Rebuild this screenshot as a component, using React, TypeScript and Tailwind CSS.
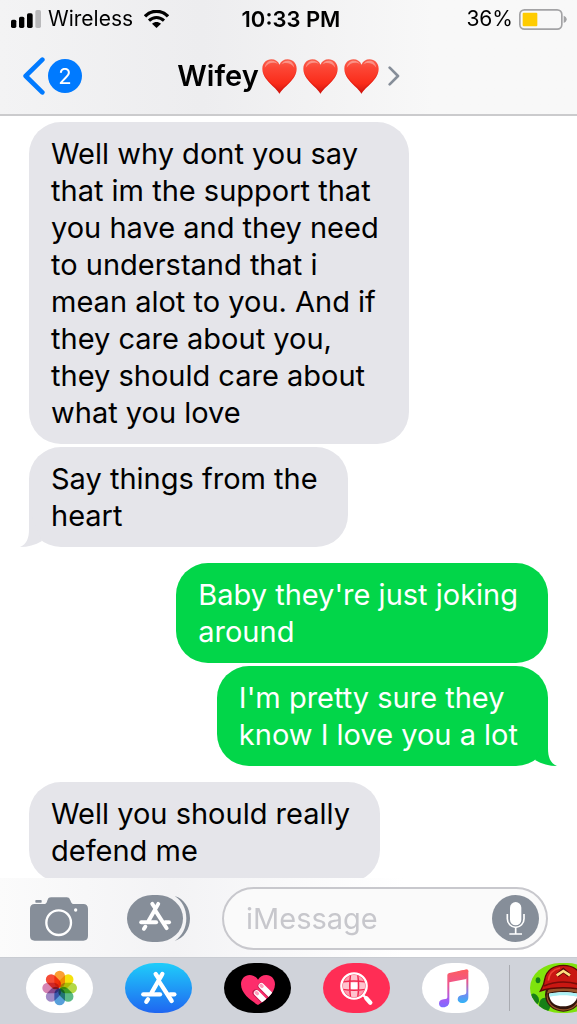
import type { ReactNode } from "react";
import { clsx } from "clsx";

type Message = {
  from: "me" | "them";
  text: string;
  tail?: boolean;
  newGroup?: boolean;
};

const messages: Message[] = [
  {
    from: "them",
    text: "Well why dont you say\nthat im the support that\nyou have and they need\nto understand that i\nmean alot to you. And if\nthey care about you,\nthey should care about\nwhat you love",
  },
  { from: "them", text: "Say things from the\nheart", tail: true },
  { from: "me", text: "Baby they're just joking\naround", newGroup: true },
  { from: "me", text: "I'm pretty sure they\nknow I love you a lot", tail: true },
  { from: "them", text: "Well you should really\ndefend me", newGroup: true },
];

const petals = ["#fb9a28", "#f5e000", "#b0d63c", "#52b780", "#4f9ad8", "#9c84c4", "#d47eb0", "#f5412c"];

function SignalIcon() {
  return (
    <svg viewBox="0 0 90 54" className="h-[18px] w-[30px]" aria-hidden="true">
      <rect x="0" y="29" width="16" height="25" rx="5" />
      <rect x="24" y="20" width="16" height="34" rx="5" />
      <rect x="48" y="10" width="17" height="44" rx="5" />
      <rect x="73" y="0" width="17" height="54" rx="5" fill="#b9b9bb" />
    </svg>
  );
}

function WifiIcon() {
  return (
    <svg viewBox="0 0 75 54" className="h-[18px] w-[25px]" aria-hidden="true">
      <path d="M3 19C22-1 53-1 72 19" fill="none" stroke="#000" strokeWidth="10" />
      <path d="M15 32C28 19 47 19 60 32" fill="none" stroke="#000" strokeWidth="9" />
      <path d="M24 41c8-7 19-7 27 0L37.500 54z" />
    </svg>
  );
}

function BatteryIcon() {
  return (
    <svg viewBox="0 0 144 63" className="h-[21px] w-[48px]" aria-hidden="true">
      <rect x="2.500" y="2.500" width="126" height="58" rx="14" fill="none" stroke="#a3a3a5" strokeWidth="5" />
      <rect x="11" y="11" width="44" height="41" rx="3" fill="#ffcc00" />
      <path d="M134 20c12 4 12 18 0 22z" fill="#a3a3a5" />
    </svg>
  );
}

function Heart({ id }: { id: string }) {
  return (
    <svg viewBox="0 0 104 104" className="h-[35px] w-[35px]" aria-hidden="true">
      <defs>
        <linearGradient id={id} x1="0" y1="0" x2="0" y2="1">
          <stop offset="0" stopColor="#f8604e" />
          <stop offset="0.25" stopColor="#fc4635" />
          <stop offset="0.7" stopColor="#fa2c1a" />
          <stop offset="1" stopColor="#cf160f" />
        </linearGradient>
      </defs>
      <path
        d="M52 103C42 84 1 62 1 29 1 12 13 1 28 1c11 0 20 6 24 16C56 7 65 1 76 1c15 0 27 11 27 28 0 33-41 55-51 74z"
        fill={`url(#${id})`}
      />
      <path d="M8 26C10 13 18 5 29 5c9 0 15 4 18 10-9-6-28-7-39 11z" fill="#fff" opacity="0.35" />
      <path d="M57 16C61 9 67 5 76 5c11 0 18 8 20 21C85 9 66 9 57 16z" fill="#fff" opacity="0.35" />
      <path d="M102 36c-3 28-38 46-50 67C42 84 5 64 2 36c9 28 38 43 50 59 13-16 41-31 50-59z" fill="#d0150e" opacity="0.4" />
    </svg>
  );
}

function CameraIcon() {
  return (
    <svg viewBox="0 0 174 132" className="h-[44px] w-[58px]" aria-hidden="true">
      <path
        d="M14 21h28c8 0 8-6 11-13 2-5 5-7 10-7h47c5 0 8 2 10 7 4 7 4 13 12 13h28c9 0 14 5 14 14v82c0 9-5 14-14 14H14c-9 0-14-5-14-14V35c0-9 5-14 14-14z"
        fill="#868e99"
      />
      <rect x="16" y="9" width="19" height="8" rx="2" fill="#868e99" />
      <circle cx="86" cy="77" r="37" fill="none" stroke="#fff" strokeWidth="7" />
      <circle cx="137" cy="39" r="5" fill="#fff" />
    </svg>
  );
}

// The crossed sticks, shared by the drawer button and the App Store pill
function StoreGlyph() {
  return (
    <g fill="none" stroke="#fff" strokeLinecap="round" strokeWidth="13">
      <path d="M112 33 80 89" />
      <path d="M55 94h50" />
      <path d="M135 94h13" />
      <path d="m69 109-5 7" />
      <path d="m92 33 8 12M104 58l36 56" />
    </g>
  );
}

function AppDrawerIcon() {
  return (
    <svg viewBox="0 0 189 141" className="h-[47px] w-[63px]" aria-hidden="true">
      <rect width="168" height="141" rx="76" ry="70.500" fill="#868e99" />
      <path d="M143 3c28 8 46 35 46 67s-18 60-46 68c23-15 35-40 35-68S166 18 143 3z" fill="#868e99" />
      <g transform="translate(-7 -3) scale(0.9)">
        <StoreGlyph />
      </g>
    </svg>
  );
}

function MicIcon() {
  return (
    <svg viewBox="0 0 141 141" className="size-[47px]" aria-hidden="true">
      <circle cx="70.500" cy="70.500" r="70.500" fill="#868e99" />
      <rect x="54" y="21" width="34" height="70" rx="17" fill="#fff" />
      <path d="M46 57v14a25 26 0 0 0 50 0V57M71 97v19M52 117h38" fill="none" stroke="#fff" strokeWidth="5" />
    </svg>
  );
}

function PhotosArt() {
  return (
    <svg viewBox="0 0 201 150" className="h-full w-full" aria-hidden="true">
      <rect width="201" height="150" fill="#fff" />
      {petals.map((color, i) => (
        <rect
          key={color}
          x="85"
          y="23"
          width="32"
          height="51"
          rx="16"
          fill={color}
          opacity="0.95"
          transform={`rotate(${i * 45} 101 75)`}
          className="mix-blend-multiply"
        />
      ))}
    </svg>
  );
}

function StoreArt() {
  return (
    <svg viewBox="0 0 201 150" className="h-full w-full" aria-hidden="true">
      <defs>
        <linearGradient id="store" x1="0" y1="0" x2="0" y2="1">
          <stop offset="0" stopColor="#1fcdfa" />
          <stop offset="1" stopColor="#1f66f1" />
        </linearGradient>
      </defs>
      <rect width="201" height="150" fill="url(#store)" />
      <StoreGlyph />
    </svg>
  );
}

function TouchArt() {
  const heart = "M102 126C86 116 51 94 51 64c0-17 12-28 26-28 11 0 20 6 25 14 5-8 14-14 25-14 14 0 26 11 26 28 0 30-35 52-51 62z";
  return (
    <svg viewBox="0 0 201 150" className="h-full w-full" aria-hidden="true">
      <defs>
        <clipPath id="touch">
          <path d={heart} />
        </clipPath>
      </defs>
      <rect width="201" height="150" fill="#000" />
      <path d={heart} fill="#fd2d6b" />
      <g clipPath="url(#touch)" fill="none" strokeLinecap="round">
        <path d="m95 89 42 42M111 69l42 42" stroke="#c41c50" strokeWidth="20" />
        <path d="m98 90 42 42M112 68l42 42" stroke="#fff" strokeWidth="17" />
        <path d="m97 89 3 3M111 67l3 3" stroke="#ff9dbb" strokeWidth="10" />
      </g>
    </svg>
  );
}

function SearchArt() {
  return (
    <svg viewBox="0 0 201 150" className="h-full w-full" aria-hidden="true">
      <defs>
        <clipPath id="globe">
          <circle cx="93" cy="69" r="33" />
        </clipPath>
      </defs>
      <rect width="201" height="150" fill="#ff2d55" />
      <g clipPath="url(#globe)">
        <rect x="60" y="36" width="66" height="66" fill="#ff9bae" />
        <path d="M84 36h18v20H84zM60 58h22v20H60zM104 58h22v20h-22zM84 80h18v22H84z" fill="#ffc3ce" />
        <rect x="84" y="58" width="19" height="20" fill="#fff" />
        <path d="M83 34q-6 35 0 70M104 34q6 35 0 70M58 57q35-6 70 0M58 79q35 6 70 0" fill="none" stroke="#f0284e" strokeWidth="4" />
      </g>
      <circle cx="93" cy="69" r="38" fill="none" stroke="#fff" strokeWidth="7" />
      <path d="m121 97 8 8" stroke="#fff" strokeWidth="7" />
      <path d="m130 106 12 13" stroke="#fff" strokeWidth="13" strokeLinecap="round" />
    </svg>
  );
}

function MusicArt() {
  return (
    <svg viewBox="0 0 201 150" className="h-full w-full" aria-hidden="true">
      <defs>
        <linearGradient id="noteLeft" gradientUnits="userSpaceOnUse" x1="0" y1="22" x2="0" y2="132">
          <stop offset="0" stopColor="#fd5c62" />
          <stop offset="0.400" stopColor="#ee5590" />
          <stop offset="0.800" stopColor="#a25cf5" />
          <stop offset="1" stopColor="#7c6bff" />
        </linearGradient>
        <linearGradient id="noteRight" gradientUnits="userSpaceOnUse" x1="0" y1="22" x2="0" y2="120">
          <stop offset="0" stopColor="#fd5c62" />
          <stop offset="0.350" stopColor="#e2588f" />
          <stop offset="0.700" stopColor="#7b86f0" />
          <stop offset="1" stopColor="#30b4f7" />
        </linearGradient>
      </defs>
      <rect width="201" height="150" fill="#fff" />
      <path
        d="M128 21q11-4 11 3v78c0 12-8 18-19 18-8 0-13-5-13-11 0-8 6-12 14-13 8-1 12-2 12-9V46l-26 4V25z"
        fill="url(#noteRight)"
      />
      <path
        d="M129 20 82 30q-6 1-6 6v67c0 4-3 5-11 6-9 1-14 5-14 13 0 7 6 11 13 11 11 0 18-7 18-18V58l51-10 6-24q-2-6-10-4z"
        fill="url(#noteLeft)"
      />
    </svg>
  );
}

function MonkeyArt() {
  return (
    <svg viewBox="0 0 201 150" className="h-full w-full" aria-hidden="true">
      <rect width="201" height="150" fill="#7fe30c" />
      <g fill="#178017">
        <ellipse cx="24" cy="52" rx="7" ry="9" />
        <ellipse cx="14" cy="108" rx="12" ry="17" transform="rotate(-25 14 108)" />
        <ellipse cx="44" cy="126" rx="17" ry="22" />
        <ellipse cx="165" cy="125" rx="18" ry="20" />
      </g>
      <ellipse cx="100" cy="95" rx="55" ry="51" fill="#3c1709" />
      <ellipse cx="100" cy="99" rx="50" ry="44" fill="#98532a" />
      <path d="M52 91c29-9 67-9 96 0 0 29-20 48-48 48S52 120 52 91z" fill="#31130a" />
      <path d="M57 92c25-6 61-6 86 0-1 23-16 38-43 38S58 115 57 92z" fill="#fff" />
      <path d="M57 92c25-6 61-6 86 0l-3 9c-24-6-56-6-80 0z" fill="#aaf0f5" />
      <path d="M31 84C35 76 42 68 44 50 49 20 73 7 100 7s51 13 56 43c2 18 9 26 13 34-38-13-100-13-138 0z" fill="#c91712" stroke="#5b0805" strokeWidth="4" />
      <path d="M42 69c35-16 81-16 116 0" fill="none" stroke="#790b08" strokeWidth="5" />
      <path d="M55 53c2-22 16-34 35-38" fill="none" stroke="#ef4032" strokeWidth="5" />
      <path d="m82 37 18-15 18 15" fill="none" stroke="#5b0805" strokeWidth="13" />
      <path d="m80 37 20-13 20 13" fill="none" stroke="#ffe080" strokeWidth="8" />
    </svg>
  );
}

function Bubble({ message }: { message: Message }) {
  const mine = message.from === "me";
  return (
    <li
      className={clsx(
        "relative w-fit whitespace-pre-line rounded-[32px] py-[13px] pl-[22px] pr-[30px] text-[29px] leading-[37px]",
        mine ? "self-end bg-[#02d649] text-white" : "self-start bg-[#e5e5ea] text-black",
        message.newGroup && "mt-[13px]",
      )}
    >
      {message.text}
      {message.tail && (
        <svg
          viewBox="0 0 24 32"
          className={clsx("absolute bottom-0 h-8 w-6", mine ? "-right-[9px] -scale-x-100" : "-left-[9px]")}
          aria-hidden="true"
        >
          <path d="M9 0v14C9 23 7 29 0 32c8 0 15-2 22-6L11 0z" fill={mine ? "#02d649" : "#e5e5ea"} />
        </svg>
      )}
    </li>
  );
}

function AppPill({ label, children }: { label: string; children: ReactNode }) {
  return (
    <button type="button" aria-label={label} className="h-[50px] w-[67px] shrink-0 overflow-hidden rounded-[30px/25px]">
      {children}
    </button>
  );
}

export default function App() {
  return (
    <div className="flex h-screen flex-col overflow-hidden bg-white font-['Inter','Liberation_Sans',sans-serif] text-black">
      <header className="shrink-0 border-b-2 border-[#cbcbcd] bg-linear-to-r from-[#f3f3f4] via-[#ededef] via-35% to-[#f8f8f8] to-75%">
        <div className="grid h-[38px] grid-cols-[1fr_auto_1fr] items-center pl-[11px] pr-1.5 text-[21px]">
          <div className="flex items-center gap-[7px]">
            <SignalIcon />
            <span>Wireless</span>
            <span className="ml-1">
              <WifiIcon />
            </span>
          </div>
          <time className="text-[22px] font-semibold">10:33 PM</time>
          <div className="flex items-center justify-end gap-1.5 pr-1">
            <span>36%</span>
            <BatteryIcon />
          </div>
        </div>
        <nav className="grid h-[76px] grid-cols-[1fr_auto_1fr] items-center px-[23px]">
          <button type="button" aria-label="Back, 2 unread" className="flex items-center gap-[3px] justify-self-start">
            <svg viewBox="0 0 66 114" className="h-[38px] w-[22px]" aria-hidden="true">
              <path d="M58 8 8 57l50 49" fill="none" stroke="#007aff" strokeWidth="14" strokeLinecap="round" strokeLinejoin="round" />
            </svg>
            <span className="flex size-[34px] items-center justify-center rounded-full bg-[#007aff] text-[22px] text-white">2</span>
          </button>
          <button type="button" className="flex items-center gap-[3px]">
            <h1 className="text-[29px] font-semibold leading-9">Wifey</h1>
            <span className="flex gap-1.5">
              <Heart id="heart1" />
              <Heart id="heart2" />
              <Heart id="heart3" />
            </span>
            <svg viewBox="0 0 36 60" className="ml-1.5 h-5 w-3" aria-hidden="true">
              <path d="m5 5 25 25L5 55" fill="none" stroke="#868e99" strokeWidth="8" strokeLinecap="round" strokeLinejoin="round" />
            </svg>
          </button>
        </nav>
      </header>

      <main className="min-h-0 flex-1 overflow-hidden px-[29px] pt-1.5">
        <ul className="flex flex-col gap-[3px]">
          {messages.map((message) => (
            <Bubble key={message.text} message={message} />
          ))}
        </ul>
      </main>

      <form className="flex shrink-0 items-center bg-linear-to-r from-[#fbfbfb] via-[#f3f3f5] via-30% to-white to-70% pb-[7px] pl-[30px] pr-[29px] pt-[9px]">
        <button type="button" aria-label="Camera">
          <CameraIcon />
        </button>
        <button type="button" aria-label="Apps" className="ml-[39px]">
          <AppDrawerIcon />
        </button>
        <div className="ml-8 flex h-[63px] min-w-0 flex-1 items-center rounded-full border-2 border-[#c8c8cd] bg-[#fafafa] pl-[22px] pr-[7px]">
          <input
            type="text"
            aria-label="Message"
            placeholder="iMessage"
            className="min-w-0 flex-1 bg-transparent text-[29px] outline-none placeholder:text-[#c7c7cc]"
          />
          <button type="button" aria-label="Dictate">
            <MicIcon />
          </button>
        </div>
      </form>

      <footer className="flex h-[67px] shrink-0 items-start gap-8 overflow-hidden border-t border-[#c9ccd2] bg-[#d0d3da] pl-[26px] pt-[5px]">
        <AppPill label="Photos">
          <PhotosArt />
        </AppPill>
        <AppPill label="App Store">
          <StoreArt />
        </AppPill>
        <AppPill label="Digital Touch">
          <TouchArt />
        </AppPill>
        <AppPill label="Images">
          <SearchArt />
        </AppPill>
        <AppPill label="Music">
          <MusicArt />
        </AppPill>
        <div className="-ml-3 flex shrink-0 items-center gap-5">
          <div className="h-[46px] w-px bg-[#a9abb1]" />
          <AppPill label="Monkey stickers">
            <MonkeyArt />
          </AppPill>
        </div>
      </footer>
    </div>
  );
}
